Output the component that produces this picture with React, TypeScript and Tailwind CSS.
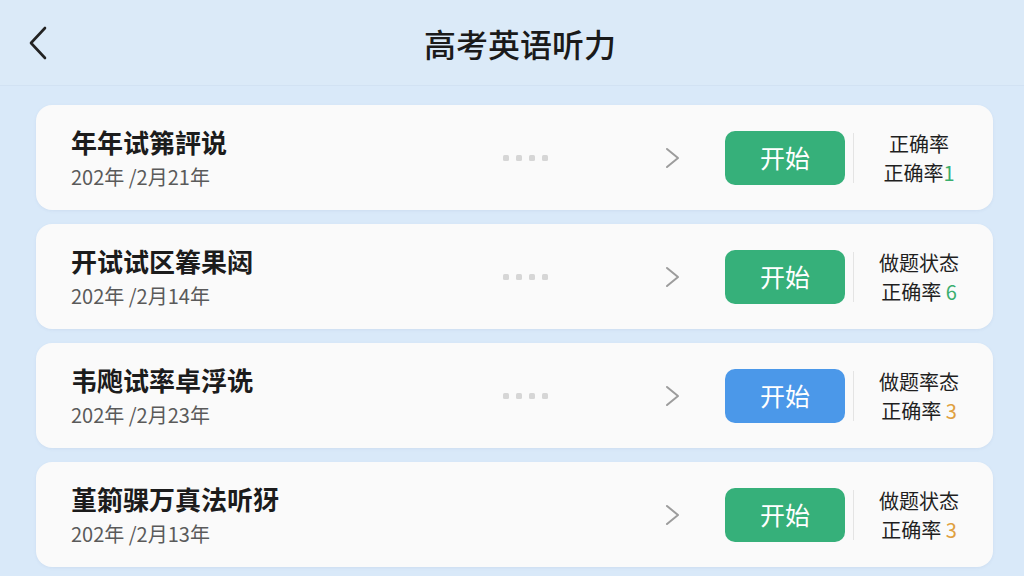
type Item = {
  title: string;
  date: string;
  tone: 'green' | 'blue';
  line1: string;
  score: string;
  scoreColor: string;
  dots: boolean;
};

const items: Item[] = [
  { title: '年年试笰評说', date: '202年 /2月21年', tone: 'green', line1: '正确率', score: '1', scoreColor: 'text-[#3aae6e]', dots: true },
  { title: '开试试区箺果闼', date: '202年 /2月14年', tone: 'green', line1: '做题状态', score: ' 6', scoreColor: 'text-[#3aae6e]', dots: true },
  { title: '韦飑试率卓浮诜', date: '202年 /2月23年', tone: 'blue', line1: '做题率态', score: ' 3', scoreColor: 'text-[#e0a040]', dots: true },
  { title: '堇箣骒万真法听犽', date: '202年 /2月13年', tone: 'green', line1: '做题状态', score: ' 3', scoreColor: 'text-[#e0a040]', dots: false },
];

function Dots({ visible }: { visible: boolean }) {
  return (
    <div className="flex w-[46px] items-center gap-[7px]">
      {visible &&
        [0, 1, 2, 3].map((i) => (
          <span key={i} className="h-[6px] w-[6px] rounded-[1.5px] bg-[#d6d6d6]" />
        ))}
    </div>
  );
}

function ListCard({ item }: { item: Item }) {
  return (
    <div className="flex h-[105px] items-center rounded-[16px] bg-[#fafafa] pl-[35px] pr-[29px] shadow-[0_1px_3px_rgba(120,150,190,0.12)]">
      <div className="flex flex-1 flex-col gap-[6px]">
        <div className="text-[26px] font-bold leading-[32px] text-[#1c1c1c]">{item.title}</div>
        <div className="text-[20px] leading-[26px] text-[#5a5a5a]">{item.date}</div>
      </div>
      <Dots visible={item.dots} />
      {/* chevron */}
      <svg className="ml-[116px] h-[24px] w-[16px] text-[#9c9c9c]" viewBox="0 0 16 24" fill="none">
        <path d="M2 3 L13 12 L2 21" stroke="currentColor" strokeWidth="2" strokeLinecap="round" strokeLinejoin="round" />
      </svg>
      <button
        className={
          item.tone === 'blue'
            ? 'ml-[44px] flex h-[54px] w-[120px] items-center justify-center rounded-[10px] bg-[#4b98e9] text-[25px] text-white'
            : 'ml-[44px] flex h-[54px] w-[120px] items-center justify-center rounded-[10px] bg-[#36b07a] text-[25px] text-white'
        }
      >
        开始
      </button>
      <div className="ml-[8px] h-[50px] w-px bg-[#e4e4e4]" />
      <div className="ml-[20px] flex w-[90px] flex-col items-center text-[20px] leading-[29px] text-[#1f1f1f]">
        <span>{item.line1}</span>
        <span className="whitespace-pre">
          正确率<span className={item.scoreColor}>{item.score}</span>
        </span>
      </div>
    </div>
  );
}

export default function App() {
  return (
    <div
      className="flex h-[576px] w-[1024px] flex-col overflow-hidden bg-[#d9e9f9]"
      style={{ fontFamily: '"Noto Sans CJK SC", "Noto Sans", sans-serif' }}
    >
      <header className="relative flex h-[86px] shrink-0 items-center justify-center border-b border-[#d2e2f3] bg-[#dbeaf8]">
        <svg className="absolute left-[28px] top-[26px] h-[34px] w-[20px] text-[#222]" viewBox="0 0 20 34" fill="none">
          <path d="M17 2 L3 17 L17 32" stroke="currentColor" strokeWidth="2.6" strokeLinecap="round" strokeLinejoin="round" />
        </svg>
        <h1 className="pl-[16px] text-[32px] font-medium text-[#1a1a1a]">高考英语听力</h1>
      </header>
      <main className="flex flex-col gap-[14px] pl-[36px] pr-[31px] pt-[19px]">
        {items.map((item) => (
          <ListCard key={item.title} item={item} />
        ))}
      </main>
    </div>
  );
}
